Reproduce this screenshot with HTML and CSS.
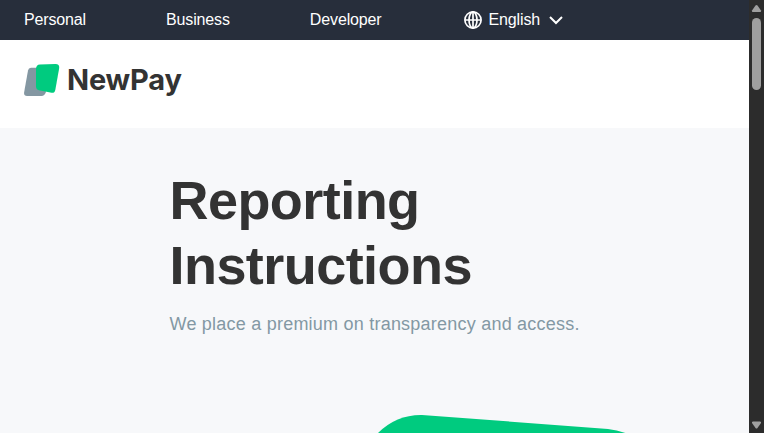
FILE: index.html
```html
<!DOCTYPE html>
<html lang="en">
<head>
<meta charset="utf-8">
<title>NewPay – Reporting Instructions</title>
<link rel="stylesheet" href="styles.css">
</head>
<body>
<div class="page">
  <nav class="topbar">
    <a>Personal</a>
    <a>Business</a>
    <a>Developer</a>
    <a class="language">
      <svg class="globe" width="20" height="20" viewBox="0 0 20 20" fill="none" stroke="#fff" stroke-width="1.7"><circle cx="10" cy="10" r="8.1"/><ellipse cx="10" cy="10" rx="4" ry="8.1"/><path d="M2 10h16M10 2v16"/></svg>
      <span>English</span>
      <svg class="chevron" width="14" height="10" viewBox="0 0 14 10" fill="none" stroke="#fff" stroke-width="2"><path d="M1 2l6 6 6-6"/></svg>
    </a>
  </nav>
  <header class="brand">
    <svg class="mark" width="36" height="34" viewBox="0 0 36 34"><path fill="#8497a2" d="M7 3.800H14L22 28Q20.500 32 17.500 32H3Q-.3 32 .1 28.500L4 6.500Q4.500 3.800 7 3.800Z"/><path fill="#00cb7f" d="M16 .4L31.500 0Q35.600 0 35.200 4L31.300 26Q30.600 29.200 27.500 28.800L15 26.300Q12 25.500 12 22.500V5Q12 .6 16 .4Z"/></svg>
    <span class="wordmark">NewPay</span>
  </header>
  <main class="hero">
    <h1>Reporting Instructions</h1>
    <p>We place a premium on transparency and access.</p>
    <svg class="art" width="300" height="33" viewBox="0 0 300 33"><path fill="#00cb7f" d="M27 34Q46 14.500 72 15L258 29Q268 30 278 34Z"/></svg>
  </main>
</div>
<aside class="scrollbar">
  <svg width="15" height="17" viewBox="0 0 15 17"><path fill="#9f9f9f" d="M6.500 5.500Q7.500 4.500 8.500 5.500L12 10.500Q12.500 12 11 12H4Q2.500 12 3 10.500Z"/></svg>
  <div class="thumb"></div>
  <svg class="down" width="15" height="17" viewBox="0 0 15 17"><path fill="#9f9f9f" d="M6.500 12Q7.500 13 8.500 12L12 7Q12.500 5.500 11 5.500H4Q2.500 5.500 3 7Z"/></svg>
</aside>
</body>
</html>
```

FILE: styles.css
```css
* { box-sizing: border-box; }
body {
  margin: 0;
  height: 433px;
  display: flex;
  overflow: hidden;
  font-family: "Liberation Sans", Arial, sans-serif;
  color: #333;
}
.page { flex: 1; display: flex; flex-direction: column; }
.topbar {
  height: 40px;
  flex: none;
  display: flex;
  align-items: center;
  gap: 80px;
  padding: 0 24px;
  background: #272e3b;
  color: #fff;
  font-size: 16px;
  line-height: 20px;
  letter-spacing: -0.14px;
}
.language { display: flex; align-items: center; margin-left: 1px; }
.globe { margin-right: 6px; }
.chevron { margin-left: 8.500px; }
.brand {
  height: 88px;
  flex: none;
  display: flex;
  padding: 24px 24px 0;
  background: #fff;
}
.wordmark {
  margin-left: 7px;
  font: 700 29px/32px Inter, sans-serif;
  letter-spacing: -0.2px;
}
.hero {
  flex: 1;
  display: flex;
  flex-direction: column;
  padding: 40px 99px 0 169.500px;
  background: #f7f8fa;
}
h1 {
  margin: 0;
  width: 410px;
  font-size: 54px;
  line-height: 65px;
  letter-spacing: -0.55px;
}
p {
  margin: 12px 0 0;
  font-size: 18px;
  line-height: 28px;
  letter-spacing: 0.225px;
  color: #8398a4;
  white-space: nowrap;
}
.art { margin: auto 0 0 180.500px; flex: none; }
.scrollbar {
  width: 15px;
  flex: none;
  display: flex;
  flex-direction: column;
  align-items: center;
  background: #2c2c2c;
}
.thumb {
  width: 9px;
  height: 72px;
  margin-top: 1px;
  border-radius: 5px;
  background: #9f9f9f;
}
.down { margin-top: auto; }
```
